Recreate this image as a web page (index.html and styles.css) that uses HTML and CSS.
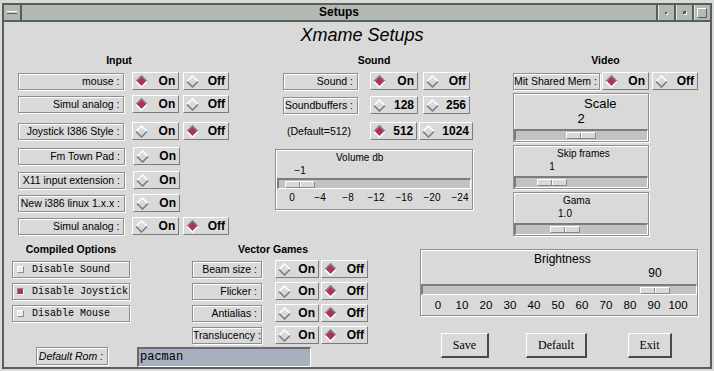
FILE: index.html
```html
<!DOCTYPE html>
<html lang="en">
<head>
    <meta charset="UTF-8">
    <title>Setups</title>
    <link rel="stylesheet" href="styles.css">
</head>
<body>
    <svg class="defs" width="0" height="0">
        <symbol id="dia-off" viewBox="0 0 13 13">
            <path d="M1 6.5 L6.5 1 L12 6.5" fill="none" stroke="#ffffff" stroke-width="1.6"/>
            <path d="M1 6.5 L6.5 12 L12 6.5" fill="none" stroke="#7c7c7c" stroke-width="1.6"/>
        </symbol>
        <symbol id="dia-on" viewBox="0 0 13 13">
            <polygon points="6.5,1.5 11.5,6.5 6.5,11.5 1.5,6.5" fill="#b03060"/>
            <path d="M1 6.5 L6.5 1 L12 6.5" fill="none" stroke="#7c7c7c" stroke-width="1.6"/>
            <path d="M1 6.5 L6.5 12 L12 6.5" fill="none" stroke="#ffffff" stroke-width="1.6"/>
        </symbol>
    </svg>

    <div class="window">
        <div class="titlebar">
            <div class="tb-btn tb-menu"><span class="ico-bar"></span></div>
            <div class="tb-title">Setups</div>
            <div class="tb-btn"><span class="ico-dot"></span></div>
            <div class="tb-btn"><span class="ico-sq"></span></div>
            <div class="tb-btn"><span class="ico-box"></span></div>
        </div>

        <div class="content">
            <h1 class="heading">Xmame Setups</h1>

            <div class="top">
                <!-- Input -->
                <div class="input-col">
                    <div class="col-head">Input</div>
                    <div class="row">
                        <div class="label">mouse :</div>
                        <div class="toggle opt-a"><svg class="dia" width="13" height="13"><use href="#dia-on"/></svg><span>On</span></div>
                        <div class="toggle opt-b"><svg class="dia" width="13" height="13"><use href="#dia-off"/></svg><span>Off</span></div>
                    </div>
                    <div class="row gap-l">
                        <div class="label">Simul analog :</div>
                        <div class="toggle opt-a"><svg class="dia" width="13" height="13"><use href="#dia-on"/></svg><span>On</span></div>
                        <div class="toggle opt-b"><svg class="dia" width="13" height="13"><use href="#dia-off"/></svg><span>Off</span></div>
                    </div>
                    <div class="row gap-m">
                        <div class="label">Joystick I386 Style :</div>
                        <div class="toggle opt-a"><svg class="dia" width="13" height="13"><use href="#dia-off"/></svg><span>On</span></div>
                        <div class="toggle opt-b"><svg class="dia" width="13" height="13"><use href="#dia-on"/></svg><span>Off</span></div>
                    </div>
                    <div class="row gap-s">
                        <div class="label">Fm Town Pad :</div>
                        <div class="toggle opt-a"><svg class="dia" width="13" height="13"><use href="#dia-off"/></svg><span>On</span></div>
                    </div>
                    <div class="row">
                        <div class="label">X11 input extension :</div>
                        <div class="toggle opt-a"><svg class="dia" width="13" height="13"><use href="#dia-off"/></svg><span>On</span></div>
                    </div>
                    <div class="row">
                        <div class="label">New i386 linux 1.x.x :</div>
                        <div class="toggle opt-a"><svg class="dia" width="13" height="13"><use href="#dia-off"/></svg><span>On</span></div>
                    </div>
                    <div class="row">
                        <div class="label">Simul analog :</div>
                        <div class="toggle opt-a"><svg class="dia" width="13" height="13"><use href="#dia-off"/></svg><span>On</span></div>
                        <div class="toggle opt-b"><svg class="dia" width="13" height="13"><use href="#dia-on"/></svg><span>Off</span></div>
                    </div>
                </div>

                <!-- Sound -->
                <div class="sound-col">
                    <div class="col-head">Sound</div>
                    <div class="row">
                        <div class="label">Sound :</div>
                        <div class="toggle opt-a"><svg class="dia" width="13" height="13"><use href="#dia-on"/></svg><span>On</span></div>
                        <div class="toggle opt-b"><svg class="dia" width="13" height="13"><use href="#dia-off"/></svg><span>Off</span></div>
                    </div>
                    <div class="row">
                        <div class="label">Soundbuffers :</div>
                        <div class="toggle opt-a"><svg class="dia" width="13" height="13"><use href="#dia-off"/></svg><span>128</span></div>
                        <div class="toggle opt-b"><svg class="dia" width="13" height="13"><use href="#dia-off"/></svg><span>256</span></div>
                    </div>
                    <div class="row">
                        <div class="note">(Default=512)</div>
                        <div class="toggle opt-a"><svg class="dia" width="13" height="13"><use href="#dia-on"/></svg><span>512</span></div>
                        <div class="toggle opt-c"><svg class="dia" width="13" height="13"><use href="#dia-off"/></svg><span>1024</span></div>
                    </div>
                    <div class="scale volume" style="--pos: 6px">
                        <div class="scale-title">Volume db</div>
                        <div class="slide">
                            <div class="scale-value">&minus;1</div>
                            <div class="track"><div class="thumb"></div></div>
                        </div>
                        <div class="ticks">
                            <span>0</span><span>&minus;4</span><span>&minus;8</span><span>&minus;12</span><span>&minus;16</span><span>&minus;20</span><span>&minus;24</span>
                        </div>
                    </div>
                </div>

                <!-- Video -->
                <div class="video-col">
                    <div class="col-head">Video</div>
                    <div class="row">
                        <div class="label">Mit Shared Mem :</div>
                        <div class="toggle opt-a"><svg class="dia" width="13" height="13"><use href="#dia-on"/></svg><span>On</span></div>
                        <div class="toggle opt-b"><svg class="dia" width="13" height="13"><use href="#dia-off"/></svg><span>Off</span></div>
                    </div>
                    <div class="scale big" style="--pos: 50px">
                        <div class="scale-title">Scale</div>
                        <div class="slide">
                            <div class="scale-value">2</div>
                            <div class="track"><div class="thumb"></div></div>
                        </div>
                    </div>
                    <div class="scale skip" style="--pos: 21px">
                        <div class="scale-title">Skip frames</div>
                        <div class="slide">
                            <div class="scale-value">1</div>
                            <div class="track"><div class="thumb"></div></div>
                        </div>
                    </div>
                    <div class="scale gama" style="--pos: 34px">
                        <div class="scale-title">Gama</div>
                        <div class="slide">
                            <div class="scale-value">1.0</div>
                            <div class="track"><div class="thumb"></div></div>
                        </div>
                    </div>
                </div>
            </div>

            <div class="bottom">
                <div class="bottom-left">
                    <div class="bl-cols">
                        <!-- Compiled options -->
                        <div class="compiled-col">
                            <div class="col-head">Compiled Options</div>
                            <div class="check"><span class="mark"></span>Disable Sound</div>
                            <div class="check"><span class="mark checked"></span>Disable Joystick</div>
                            <div class="check"><span class="mark"></span>Disable Mouse</div>
                        </div>

                        <!-- Vector games -->
                        <div class="vector-col">
                            <div class="col-head">Vector Games</div>
                            <div class="row">
                                <div class="label">Beam size :</div>
                                <div class="toggle opt-a"><svg class="dia" width="13" height="13"><use href="#dia-off"/></svg><span>On</span></div>
                                <div class="toggle opt-b"><svg class="dia" width="13" height="13"><use href="#dia-on"/></svg><span>Off</span></div>
                            </div>
                            <div class="row">
                                <div class="label">Flicker :</div>
                                <div class="toggle opt-a"><svg class="dia" width="13" height="13"><use href="#dia-off"/></svg><span>On</span></div>
                                <div class="toggle opt-b"><svg class="dia" width="13" height="13"><use href="#dia-on"/></svg><span>Off</span></div>
                            </div>
                            <div class="row">
                                <div class="label">Antialias :</div>
                                <div class="toggle opt-a"><svg class="dia" width="13" height="13"><use href="#dia-off"/></svg><span>On</span></div>
                                <div class="toggle opt-b"><svg class="dia" width="13" height="13"><use href="#dia-on"/></svg><span>Off</span></div>
                            </div>
                            <div class="row">
                                <div class="label">Translucency :</div>
                                <div class="toggle opt-a"><svg class="dia" width="13" height="13"><use href="#dia-off"/></svg><span>On</span></div>
                                <div class="toggle opt-b"><svg class="dia" width="13" height="13"><use href="#dia-on"/></svg><span>Off</span></div>
                            </div>
                        </div>
                    </div>

                    <div class="rom-row">
                        <div class="rom-label">Default Rom :</div>
                        <div class="rom-input">pacman</div>
                    </div>
                </div>

                <div class="bottom-right">
                    <div class="scale bright" style="--pos: 217px">
                        <div class="scale-title">Brightness</div>
                        <div class="slide">
                            <div class="scale-value">90</div>
                            <div class="track"><div class="thumb"></div></div>
                        </div>
                        <div class="ticks">
                            <span>0</span><span>10</span><span>20</span><span>30</span><span>40</span><span>50</span><span>60</span><span>70</span><span>80</span><span>90</span><span>100</span>
                        </div>
                    </div>
                    <div class="buttons">
                        <button class="btn save">Save</button>
                        <button class="btn default">Default</button>
                        <button class="btn exit">Exit</button>
                    </div>
                </div>
            </div>
        </div>
    </div>
</body>
</html>
```

FILE: styles.css
```css
body {
    margin: 0;
    background-color: #d9d9d9;
    font-family: "Liberation Sans", Arial, sans-serif;
    font-size: 10.5px;
    color: #000;
}
.defs {
    position: absolute;
    width: 0;
    height: 0;
}

/* window frame */
.window {
    margin: 3px 0 0 2px;
    width: 706px;
    height: 362px;
    border: 2px solid #566058;
}
.titlebar {
    display: flex;
    height: 15px;
    background-color: #b3b9b3;
    border-bottom: 2px solid #566058;
}
.tb-btn {
    width: 16px;
    border-left: 2px solid #566058;
    display: flex;
    align-items: center;
    justify-content: center;
    box-shadow: inset 1px 0 0 #e4e8e4;
}
.tb-menu {
    border-left: none;
    border-right: 2px solid #566058;
    box-shadow: none;
}
.tb-title {
    flex: 1;
    text-align: center;
    font-weight: bold;
    font-size: 12px;
    line-height: 15px;
}
.ico-bar {
    width: 10px;
    height: 1px;
    background-color: #c8ccc8;
    border-top: 1px solid #ffffff;
    border-bottom: 1px solid #566058;
}
.ico-dot {
    width: 2px;
    height: 2px;
    background-color: #566058;
    box-shadow: 1px 1px 0 #ffffff;
}
.ico-sq {
    width: 3px;
    height: 3px;
    background-color: #566058;
    box-shadow: 1px 1px 0 #ffffff;
}
.ico-box {
    width: 8px;
    height: 8px;
    border: 1px solid;
    border-color: #ffffff #566058 #566058 #ffffff;
}

/* content */
.content {
    padding-top: 3px;
}
.heading {
    margin: 0;
    padding-left: 10px;
    font-size: 18px;
    font-style: italic;
    font-weight: normal;
    line-height: 20px;
    text-align: center;
}
.top {
    display: flex;
    height: 184px;
    margin-top: 9px;
}
.col-head {
    font-weight: bold;
    font-size: 10.5px;
    line-height: 13px;
    text-align: center;
    margin-bottom: 5px;
}
.row {
    display: flex;
    align-items: center;
    height: 18px;
    margin-bottom: 5px;
}
.row.gap-l { margin-bottom: 9px; }
.row.gap-m { margin-bottom: 7px; }
.row.gap-s { margin-bottom: 6px; }

.label {
    box-sizing: border-box;
    height: 17px;
    border: 1px solid #8e8e8e;
    box-shadow: inset 1px 1px 0 #ffffff, 1px 1px 0 #ffffff;
    text-align: right;
    padding-right: 4px;
    line-height: 15px;
    white-space: nowrap;
    overflow: hidden;
}
.toggle {
    box-sizing: border-box;
    height: 18px;
    display: flex;
    align-items: center;
    justify-content: space-between;
    padding: 0 3px 0 2px;
    border: 1px solid;
    border-color: #ffffff #7c7c7c #7c7c7c #ffffff;
    font-weight: bold;
    font-size: 12px;
}
.dia {
    display: block;
}
.note {
    width: 75px;
    padding-left: 4px;
    box-sizing: border-box;
}

.input-col {
    margin-left: 14px;
    width: 211px;
}
.input-col .col-head { padding-right: 9px; }
.input-col .label { width: 107px; }
.input-col .opt-a { margin-left: 8px; width: 47px; }
.input-col .opt-b { margin-left: 4px; width: 46px; }

.sound-col {
    margin-left: 46px;
    width: 198px;
}
.sound-col .row { padding-left: 8px; }
.sound-col .row:nth-child(2) { margin-bottom: 6px; }
.sound-col .row:nth-child(3) { margin-bottom: 8px; }
.sound-col .label { width: 75px; }
.sound-col .opt-a { margin-left: 12px; width: 48px; }
.sound-col .opt-b { margin-left: 5px; width: 47px; }
.sound-col .opt-c { margin-left: 2px; width: 54px; }

.video-col {
    margin-left: 40px;
    width: 185px;
}
.video-col .row { margin-bottom: 3px; }
.video-col .label { width: 87px; }
.video-col .opt-a { margin-left: 2px; width: 47px; }
.video-col .opt-b { margin-left: 3px; width: 46px; }

/* sliders */
.scale {
    box-sizing: border-box;
    border: 1px solid #8e8e8e;
    box-shadow: inset 1px 1px 0 #ffffff, 1px 1px 0 #ffffff;
    padding-top: 2px;
}
.scale-title {
    line-height: 12px;
}
.scale-value {
    width: 30px;
    margin-left: calc(var(--pos) + 2px);
    text-align: center;
    line-height: 14px;
}
.track {
    box-sizing: border-box;
    height: 11px;
    border-style: solid;
    border-width: 2px 1px 1px 2px;
    border-color: #7c7c7c #ffffff #ffffff #7c7c7c;
    background-color: #c2c2c2;
}
.thumb {
    box-sizing: border-box;
    width: 30px;
    height: 7px;
    margin-top: 1px;
    margin-left: var(--pos);
    border: 1px solid;
    border-color: #ffffff #8a8a8a #8a8a8a #ffffff;
    background: linear-gradient(to right, #d9d9d9 13px, #8a8a8a 13px, #8a8a8a 14px, #ffffff 14px, #ffffff 15px, #d9d9d9 15px);
}
.ticks {
    display: flex;
    margin-top: 3px;
    line-height: 12px;
}
.ticks span {
    text-align: center;
    flex: none;
}

.volume {
    margin-top: 9px;
    height: 61px;
    font-size: 10px;
}
.volume .scale-title { padding-left: 60px; }
.volume .slide { margin: 0 1px; }
.volume .ticks { padding-left: 2px; }
.volume .ticks span { width: 28px; }

.video-col .scale {
    width: 136px;
    margin-top: 3px;
}
.big .scale-title {
    font-size: 13px;
    line-height: 15px;
    padding-left: 70px;
}
.big .scale-value {
    font-size: 13px;
    line-height: 15px;
}
.big .track {
    margin-top: 3px;
    height: 12px;
}
.skip, .gama {
    font-size: 10px;
}
.skip .scale-title { padding-left: 43px; }
.gama .scale-title { padding-left: 49px; }
.skip .track, .gama .track {
    margin-top: 2px;
    height: 12px;
}
.gama { margin-top: 4px; }

/* bottom half */
.bottom {
    display: flex;
    margin-top: 5px;
}
.bottom-left {
    width: 416px;
}
.bl-cols {
    display: flex;
}
.compiled-col {
    margin-left: 8px;
    width: 118px;
}
.check {
    box-sizing: border-box;
    height: 17px;
    margin-bottom: 5px;
    display: flex;
    align-items: center;
    padding-left: 4px;
    border: 1px solid #8e8e8e;
    box-shadow: inset 1px 1px 0 #ffffff, 1px 1px 0 #ffffff;
    font-family: "Liberation Mono", "Courier New", monospace;
    font-size: 10px;
    white-space: nowrap;
}
.mark {
    box-sizing: border-box;
    width: 7px;
    height: 7px;
    margin-right: 8px;
    border: 1px solid;
    border-color: #ffffff #8a8a8a #8a8a8a #ffffff;
    background-color: #ececec;
}
.mark.checked {
    background-color: #b03060;
    border-color: #8a8a8a #ffffff #ffffff #8a8a8a;
}

.vector-col {
    margin-left: 62px;
    width: 176px;
}
.vector-col .col-head {
    padding-right: 14px;
    margin-bottom: 4px;
}
.vector-col .row { margin-bottom: 4px; }
.vector-col .label { width: 70px; }
.vector-col .opt-a { margin-left: 13px; width: 44px; }
.vector-col .opt-b { margin-left: 2px; width: 47px; }

.rom-row {
    display: flex;
    align-items: flex-start;
    margin-top: -1px;
    margin-left: 32px;
}
.rom-label {
    box-sizing: border-box;
    width: 72px;
    height: 18px;
    border: 1px solid #8e8e8e;
    box-shadow: inset 1px 1px 0 #ffffff, 1px 1px 0 #ffffff;
    font-style: italic;
    text-align: right;
    padding-right: 4px;
    line-height: 16px;
}
.rom-input {
    box-sizing: border-box;
    margin-left: 29px;
    width: 174px;
    height: 20px;
    border-style: solid;
    border-width: 2px 1px 1px 2px;
    border-color: #6a6a6a #ffffff #ffffff #6a6a6a;
    background-color: #a8afbf;
    font-family: "Liberation Mono", "Courier New", monospace;
    font-size: 12px;
    line-height: 17px;
    padding-left: 1px;
}

.bottom-right {
    width: 278px;
}
.bright {
    margin-top: 6px;
    height: 67px;
    font-size: 12px;
}
.bright .scale-title {
    line-height: 14px;
    padding-left: 113px;
}
.bright .track { margin-top: 4px; }
.bright .ticks {
    padding-left: 5px;
    font-size: 11.5px;
    line-height: 14px;
}
.bright .ticks span { width: 24px; }

.buttons {
    display: flex;
    margin-top: 17px;
}
.btn {
    box-sizing: border-box;
    height: 25px;
    padding: 0;
    background-color: #d9d9d9;
    border-style: solid;
    border-width: 1px 2px 2px 1px;
    border-color: #ffffff #4a4a4a #4a4a4a #ffffff;
    font-family: "Liberation Serif", "Times New Roman", serif;
    font-size: 12px;
    color: #000;
}
.save { margin-left: 21px; width: 48px; }
.default { margin-left: 37px; width: 61px; }
.exit { margin-left: 41px; width: 44px; }
```
